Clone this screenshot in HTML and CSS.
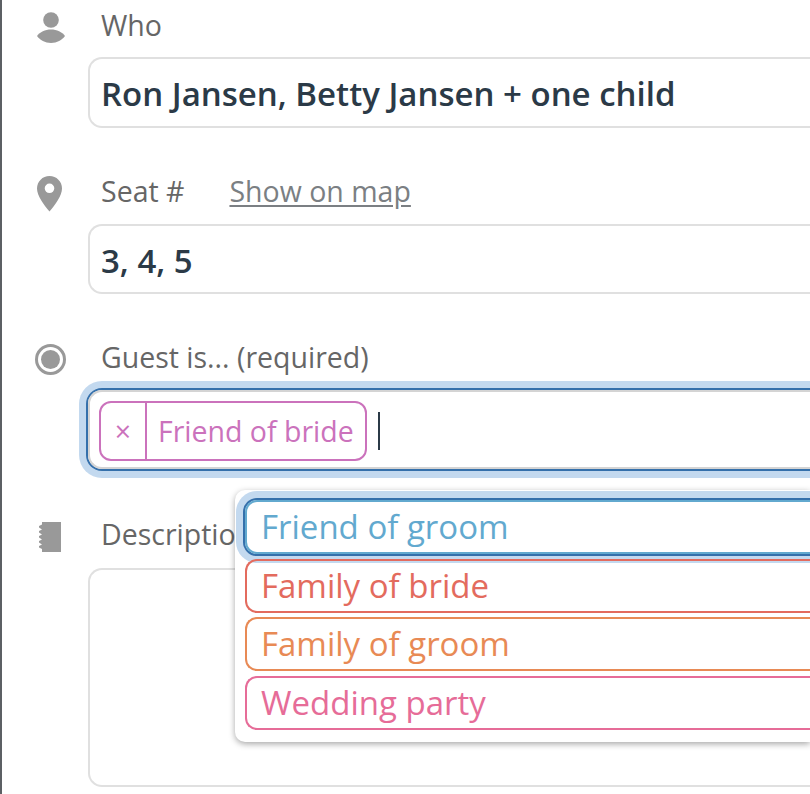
FILE: index.html
```html
<!DOCTYPE html>
<html>
<head>
  <title>Guest details</title>
  <link rel="stylesheet" href="styles.css">
</head>
<body>
  <div class="form">
    <div class="field field-who">
      <svg class="icon" viewBox="0 0 28 32" width="28" height="32"><circle cx="14" cy="8" r="7.800"/><path d="M0 24C3 20 8 17.500 14 17.500S25 20 28 24c-3 4-8 7-14 7S3 28 0 24z"/></svg>
      <div class="label-row"><label>Who</label></div>
      <div class="input"><span class="value">Ron Jansen, Betty Jansen + one child</span></div>
    </div>

    <div class="field field-seat">
      <svg class="icon" viewBox="0 0 25 36" width="25" height="36"><path fill-rule="evenodd" d="M12.500 0C5.500 0 0 5.500 0 12.500 0 19.500 7 29 12.500 35.500 18 29 25 19.500 25 12.500 25 5.500 19.500 0 12.500 0zm0 7.500a4.800 4.800 0 1 1 0 9.600 4.800 4.800 0 0 1 0-9.600z"/></svg>
      <div class="label-row"><label>Seat #</label><a class="map-link">Show on map</a></div>
      <div class="input"><span class="value">3, 4, 5</span></div>
    </div>

    <div class="field field-guest">
      <svg class="icon" viewBox="0 0 31 31" width="31" height="31"><circle class="ring" cx="15.500" cy="15.500" r="14"/><circle cx="15.500" cy="15.500" r="9.500"/></svg>
      <div class="label-row"><label>Guest is... (required)</label></div>
      <div class="input input-focus">
        <span class="tag"><span class="tag-x">×</span><span class="tag-text">Friend of bride</span></span>
        <span class="caret"></span>
      </div>
    </div>

    <div class="field field-desc">
      <svg class="icon" viewBox="0 0 22 30" width="22" height="30"><path d="M3 0h19v30H3v-3l-3-1.500V24l3-1.500-3-2V19l3-1.500-3-2V14l3-1.500-3-2V9l3-1.500-3-2V4l3-1.500z"/></svg>
      <div class="label-row"><label>Description</label></div>
      <div class="input input-area"></div>
    </div>
  </div>

  <div class="menu">
    <div class="option option-blue option-active">Friend of groom</div>
    <div class="option option-red">Family of bride</div>
    <div class="option option-orange">Family of groom</div>
    <div class="option option-pink">Wedding party</div>
  </div>
</body>
</html>
```

FILE: styles.css
```css
html, body {
  margin: 0;
  height: 794px;
  overflow: hidden;
  background: #fff;
}

body {
  position: relative;
  font-family: "Open Sans", "Noto Sans", sans-serif;
  color: #666;
}

.form {
  height: 794px;
  box-sizing: border-box;
  padding-left: 86px;
  border-left: 2px solid #5c6064;
}

.field {
  position: relative;
}

.field-who { padding-top: 5px; }
.field-seat { padding-top: 43px; }
.field-guest { padding-top: 43px; }
.field-desc { padding-top: 45px; }

.icon {
  position: absolute;
  fill: #999;
}

.icon .ring {
  fill: none;
  stroke: #999;
  stroke-width: 3;
}

.field-who .icon { top: 12px; left: -51px; }
.field-seat .icon { top: 48px; left: -51px; }
.field-guest .icon { top: 50px; left: -53px; }
.field-desc .icon { top: 53px; left: -49px; }

.label-row {
  display: flex;
  gap: 45px;
  height: 42px;
  padding-left: 13px;
  font-size: 28.5px;
  line-height: 40px;
}

.map-link {
  color: #7b7f83;
  text-decoration: underline;
  text-underline-offset: 3px;
}

.input {
  box-sizing: border-box;
  height: 71px;
  margin-top: 10px;
  padding: 2px 0 0 11px;
  border: 2px solid #e0e0e0;
  border-right: none;
  border-radius: 14px 0 0 14px;
  display: flex;
  align-items: center;
}

.field-seat .input {
  height: 70px;
  margin-top: 11px;
}

.value {
  font-size: 33px;
  font-weight: 600;
  color: #2b3a47;
}

.field-guest .input-focus {
  height: 79px;
  margin-top: 11px;
  padding: 3px 0 0 9px;
  border-color: #d4d4d4;
  box-shadow: 0 0 0 2px #3570ab, 0 0 0 9px #c3d9ef;
}

.tag {
  display: flex;
  height: 60px;
  box-sizing: border-box;
  border: 2px solid #cb72bc;
  border-radius: 12px;
  color: #cb72bc;
  font-size: 28.5px;
  line-height: 56px;
}

.tag-x {
  width: 44px;
  text-align: center;
  border-right: 2px solid #cb72bc;
}

.tag-text {
  padding: 0 11px;
}

.caret {
  width: 2px;
  height: 38px;
  margin-left: 11px;
  background: #2b3a47;
}

.field-desc .input-area {
  height: 219px;
  margin-top: 12px;
}

.menu {
  position: absolute;
  left: 235px;
  right: 0;
  top: 490px;
  height: 252px;
  box-sizing: border-box;
  padding: 10px 0 0 10px;
  background: #fff;
  border-radius: 10px 0 0 10px;
  box-shadow: 0 2px 6px rgba(0, 0, 0, 0.35);
  display: flex;
  flex-direction: column;
  gap: 4.500px;
}

.option {
  box-sizing: border-box;
  height: 54px;
  padding-left: 14px;
  border: 2px solid;
  border-right: none;
  border-radius: 12px 0 0 12px;
  font-size: 33px;
  line-height: 50px;
}

.option-blue { color: #62a9cf; border-color: #62a9cf; }
.option-red { color: #e36b5e; border-color: #e36b5e; }
.option-orange { color: #e88a55; border-color: #e88a55; }
.option-pink { color: #e66c98; border-color: #e66c98; }

.option-active {
  box-shadow: 0 0 0 2px #3570ab, 0 0 0 9px #c3d9ef;
}
```
